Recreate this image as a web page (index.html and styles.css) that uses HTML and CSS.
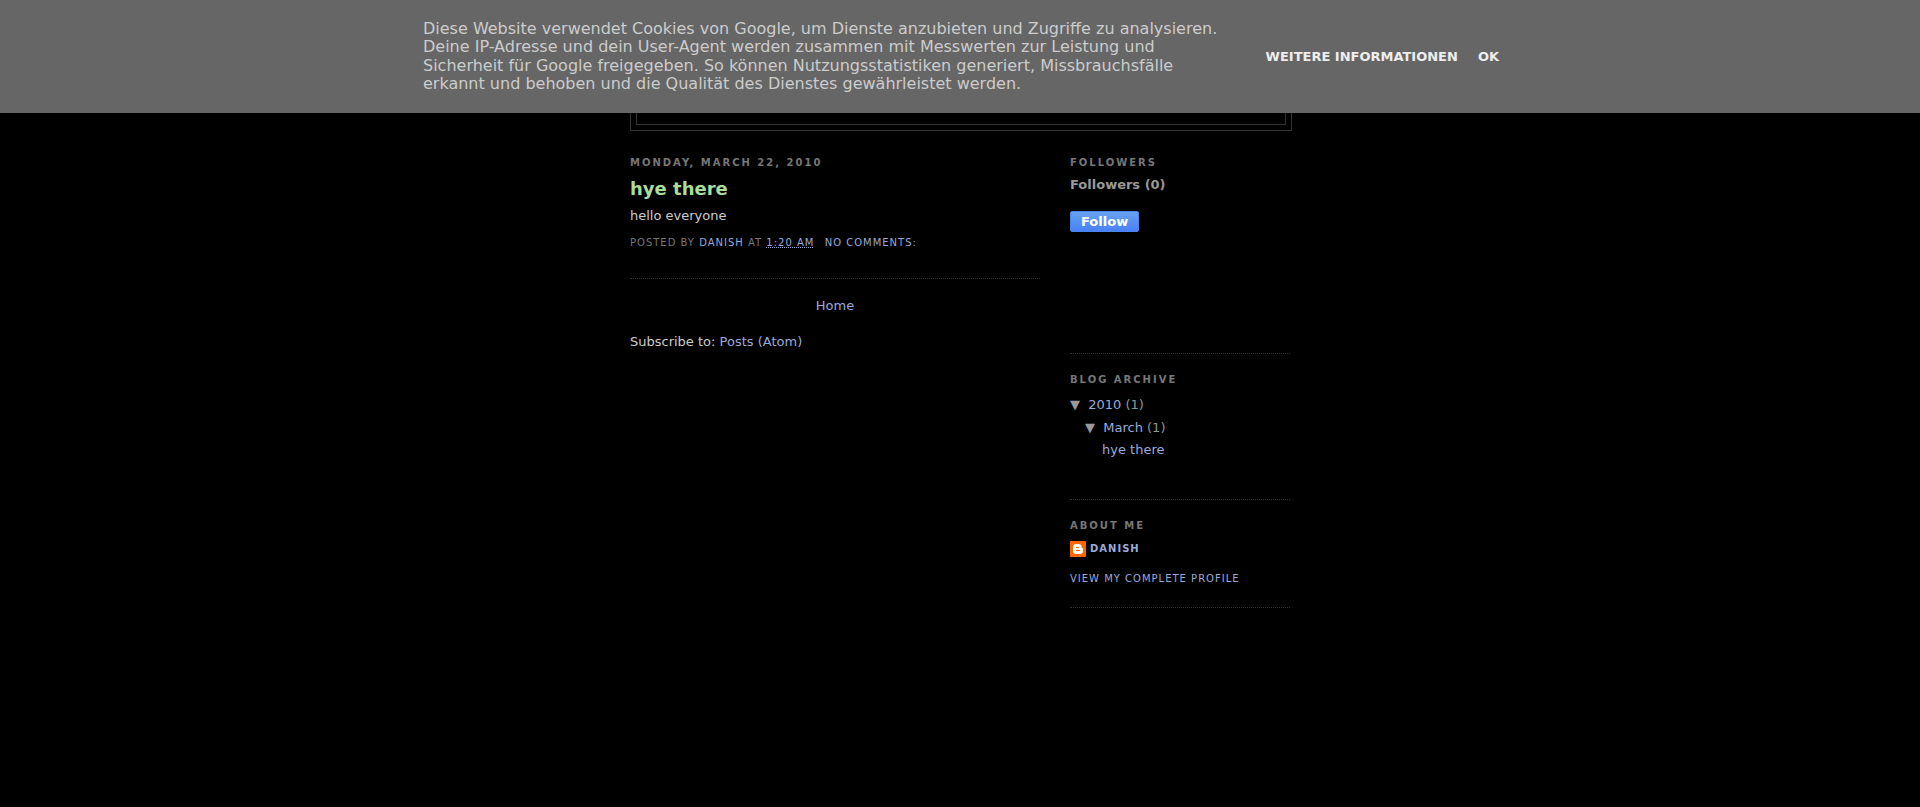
FILE: index.html
```html
<!DOCTYPE html>
<html lang="en">
<head>
    <meta charset="UTF-8">
    <meta name="viewport" content="width=device-width, initial-scale=1.0">
    <title>Blog</title>

    <link rel="stylesheet" href="styles.css">
</head>
<body>

    <div class="cookie-bar" lang="de">
        <div class="cookie-inner">
            <p class="cookie-text">Diese Website verwendet Cookies von Google, um Dienste anzubieten und Zugriffe zu analysieren. Deine IP-Adresse und dein User-Agent werden zusammen mit Messwerten zur Leistung und Sicherheit für Google freigegeben. So können Nutzungsstatistiken generiert, Missbrauchsfälle erkannt und behoben und die Qualität des Dienstes gewährleistet werden.</p>
            <div class="cookie-buttons">
                <a href="#">Weitere Informationen</a>
                <a href="#">OK</a>
            </div>
        </div>
    </div>

    <div class="wrapper">
        <header class="header">
            <div class="header-inner"></div>
        </header>

        <div class="content">
            <main class="main">
                <article class="post">
                    <h2>Monday, March 22, 2010</h2>
                    <h3 class="post-title"><a href="#">hye there</a></h3>
                    <p class="post-body">hello everyone</p>
                    <p class="post-footer">Posted by <a href="#">Danish</a> at <a href="#"><abbr title="2010-03-22T01:20:00">1:20 AM</abbr></a> <a class="comments" href="#">No comments:</a></p>
                </article>
                <nav class="pager"><a href="#">Home</a></nav>
                <p class="feed">Subscribe to: <a href="#">Posts (Atom)</a></p>
            </main>

            <aside class="sidebar">
                <section class="widget followers">
                    <h2>Followers</h2>
                    <p class="followers-count">Followers (0)</p>
                    <button type="button" class="follow">Follow</button>
                </section>

                <section class="widget archive">
                    <h2>Blog Archive</h2>
                    <ul>
                        <li>▼&nbsp; <a href="#">2010</a> <span class="count">(1)</span>
                            <ul>
                                <li>▼&nbsp; <a href="#">March</a> <span class="count">(1)</span>
                                    <ul class="posts">
                                        <li><a href="#">hye there</a></li>
                                    </ul>
                                </li>
                            </ul>
                        </li>
                    </ul>
                </section>

                <section class="widget profile">
                    <h2>About Me</h2>
                    <a class="profile-name" href="#">
                        <svg width="16" height="16" viewBox="0 0 16 16" aria-hidden="true">
                            <rect width="16" height="16" rx="1" fill="#ff6600"/>
                            <path fill="#fff" fill-rule="evenodd" d="M6 3h2.500a3 3 0 0 1 3 3c0 .8.3 1 .8 1 .5 0 .7.3.7.8V10a3 3 0 0 1-3 3H6a3 3 0 0 1-3-3V6a3 3 0 0 1 3-3zM6 6v1h3V6zM6 9v1h4V9z"/>
                        </svg>
                        Danish
                    </a>
                    <a class="profile-link" href="#">View my complete profile</a>
                </section>
            </aside>
        </div>
    </div>

</body>
</html>
```
FILE: styles.css
```css
body {
    background-color: #000;
    color: #ccc;
    font-family: "DejaVu Sans", Verdana, sans-serif;
    font-size: 13px;
    line-height: 20px;
    margin: 0;
}

a {
    color: #99aadd;
    text-decoration: none;
}

h2, h3, p, ul {
    margin: 0;
    padding: 0;
}

ul {
    list-style: none;
}

h2 {
    color: #777;
    font-size: 10px;
    line-height: 14px;
    letter-spacing: 2px;
    text-transform: uppercase;
}

/* cookie notice */
.cookie-bar {
    position: fixed;
    top: 0;
    left: 0;
    right: 0;
    z-index: 10;
    background-color: #666;
    padding: 20px 16px 19px;
}

.cookie-inner {
    display: flex;
    align-items: center;
    justify-content: space-between;
    max-width: 1076px;
    margin: 0 auto;
    padding-left: 2px;
}

.cookie-text {
    max-width: 816px;
    font-size: 16px;
    line-height: 1.15;
}

.cookie-buttons {
    display: flex;
    gap: 20px;
    white-space: nowrap;
}

.cookie-buttons a {
    color: #eee;
    font-weight: bold;
    text-transform: uppercase;
}

/* page */
.wrapper {
    max-width: 660px;
    margin: 0 auto;
    padding-top: 10px;
}

.header {
    width: 100%;
    border: 1px solid #333;
    margin-bottom: 25px;
}

.header-inner {
    min-height: 107px;
    margin: 5px;
    border: 1px solid #333;
}

.content {
    display: flex;
    justify-content: space-between;
    gap: 30px;
}

.main {
    flex: 1;
}

.sidebar {
    width: 220px;
    color: #999;
}

/* posts */
.post {
    border-bottom: 1px dotted #333;
    padding-bottom: 28px;
}

.post-title {
    margin-top: 7px;
    font-size: 18px;
    line-height: 24px;
}

.post-title a {
    color: #aadd99;
}

.post-body {
    margin-top: 5px;
}

.post-footer {
    margin-top: 10px;
    color: #777;
    font-size: 10px;
    line-height: 14px;
    letter-spacing: 1px;
    text-transform: uppercase;
}

.comments {
    margin-left: 6px;
}

.pager {
    margin: 17px 0 16px;
    text-align: center;
}

/* sidebar */
.widget {
    border-bottom: 1px dotted #333;
    margin-bottom: 19px;
}

.followers {
    padding-bottom: 121px;
}

.followers-count {
    margin: 5px 0 16px;
    font-weight: bold;
}

.follow {
    display: block;
    height: 21px;
    padding: 0 10px;
    border: 1px solid #4787ed;
    border-radius: 2px;
    background: linear-gradient(#66a3ee, #4a80f8);
    color: #fff;
    font: bold 13px "DejaVu Sans", Verdana, sans-serif;
    cursor: pointer;
}

.archive {
    padding-bottom: 39px;
}

.archive > ul {
    margin-top: 8px;
}

.archive ul ul {
    margin-top: 3px;
    padding-left: 15px;
}

.archive ul .posts {
    margin-top: 2px;
    padding-left: 17px;
}

.count {
    color: #8a9a9a;
}

.profile {
    padding-bottom: 21px;
}

.profile a {
    font-size: 10px;
    line-height: 14px;
    letter-spacing: 1px;
    text-transform: uppercase;
}

.profile-name {
    display: flex;
    align-items: center;
    gap: 4px;
    margin: 8px 0 15px;
    font-weight: bold;
}

.profile-link {
    display: block;
}
```
